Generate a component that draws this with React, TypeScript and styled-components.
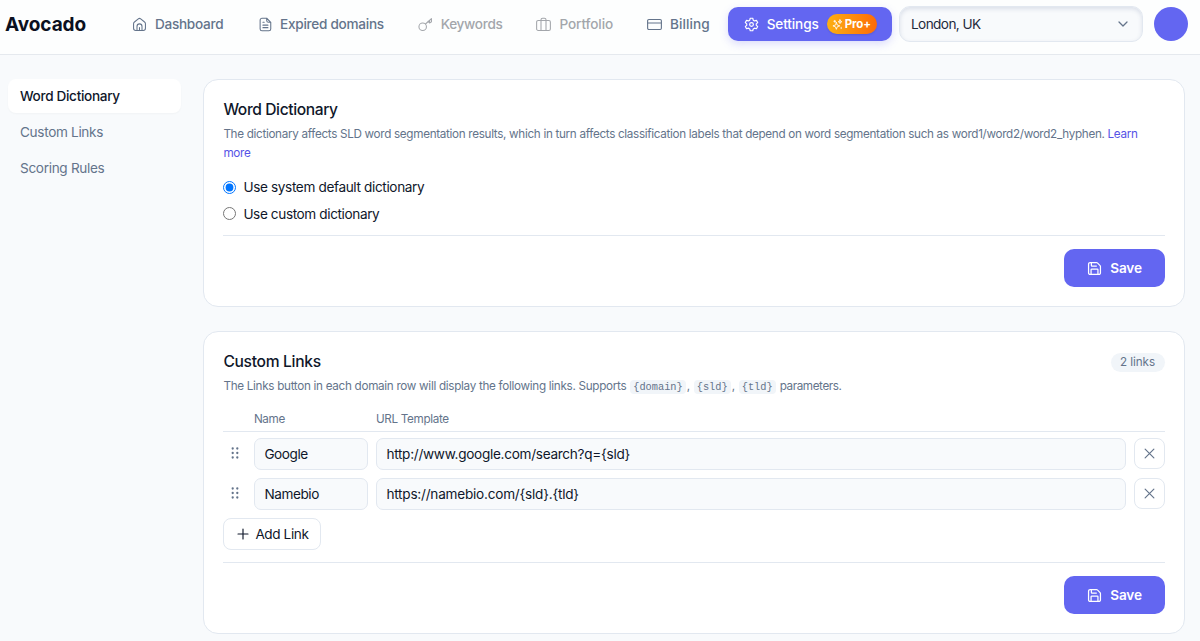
import React from "react";
import styled, { createGlobalStyle, css } from "styled-components";

const GlobalStyle = createGlobalStyle`
  *, *::before, *::after { box-sizing: border-box; }
  html, body { margin: 0; height: 100%; overflow: hidden; }
  body {
    background: #f8fafc;
    color: #0f172a;
    font-family: Inter, sans-serif;
    font-size: 13.6px;
  }
  button, input { font: inherit; color: inherit; }
`;

const Text = styled.span<{ $track?: number }>`
  letter-spacing: ${p => p.$track ?? 0}px;
  white-space: nowrap;
`;

/* ---------- header ---------- */

const Header = styled.header`
  display: flex;
  align-items: flex-start;
  height: 55px;
  padding: 7px 12px 0 5px;
  background: #fdfefe;
  border-bottom: 1px solid #e5e9ee;
`;

const Brand = styled.div`
  width: 111px;
  line-height: 35px;
  font-size: 19px;
  font-weight: 700;
  letter-spacing: -0.08px;
  color: #0b1020;
`;

const Nav = styled.nav`
  display: flex;
  gap: 1.8px;
  width: 783px;
`;

const NavItem = styled.a<{ $active?: boolean; $disabled?: boolean }>`
  display: flex;
  align-items: center;
  gap: 8px;
  height: 34px;
  padding: 0 16px;
  border-radius: 10px;
  font-weight: 500;
  color: ${p => (p.$disabled ? "#a3a6ab" : "#64748b")};
  ${p =>
    p.$active &&
    css`
      padding-right: 15px;
      color: #fff;
      background: #6366f1;
      box-shadow: 0 3px 8px rgba(99, 102, 241, 0.22);
    `}
  svg { flex: none; }
`;

const ProBadge = styled.span`
  display: flex;
  align-items: center;
  gap: 2px;
  height: 20px;
  padding: 0 6px 0 5px;
  border-radius: 10px;
  background: linear-gradient(90deg, #fcb012, #fd6a08);
  box-shadow: 0 1px 2px rgba(0, 0, 0, 0.12);
  color: #fff;
  font-size: 11.5px;
  font-weight: 700;
  letter-spacing: -0.1px;
`;

const LocationSelect = styled.button`
  display: flex;
  align-items: center;
  justify-content: space-between;
  width: 244px;
  height: 36px;
  margin: -1px 11px 0 0;
  padding: 0 13px 0 11px;
  border: 1px solid #e2e8f0;
  border-radius: 11px;
  background: #f8fafc;
  box-shadow: inset 0 2px 4px rgba(71, 85, 135, 0.16);
  color: #1e293b;
  svg { color: #64748b; }
`;

const Avatar = styled.div`
  width: 34px;
  height: 34px;
  border-radius: 50%;
  background: #6366f1;
`;

/* ---------- body ---------- */

const Body = styled.div`
  display: flex;
  align-items: flex-start;
  padding: 23.5px 15.5px 0 8px;
`;

const Sidebar = styled.aside`
  display: flex;
  flex-direction: column;
  gap: 2.3px;
  width: 173px;
  margin-right: 22.4px;
`;

const SideLink = styled.a<{ $active?: boolean }>`
  height: 34px;
  padding: 0 12px;
  line-height: 34px;
  border-radius: 8px;
  color: ${p => (p.$active ? "#0f172a" : "#64748b")};
  font-weight: ${p => (p.$active ? 500 : 400)};
  ${p => p.$active && css`background: #fff; box-shadow: 0 1px 2px rgba(15, 23, 42, 0.03);`}
`;

const Main = styled.main`
  display: flex;
  flex: 1;
  flex-direction: column;
  gap: 23.5px;
  min-width: 0;
`;

const Card = styled.section`
  padding: 19px;
  background: #fff;
  border: 1px solid #e2e8f0;
  border-radius: 15px;
`;

const CardHead = styled.div`
  display: flex;
  justify-content: space-between;
  height: 21px;
`;

const Title = styled.h2`
  margin: 0;
  line-height: 22px;
  font-size: 15.6px;
  font-weight: 500;
`;

const Description = styled.p<{ $track: number }>`
  margin: 5.500px 0 0;
  line-height: 19px;
  font-size: 11.7px;
  letter-spacing: ${p => p.$track}px;
  color: #64748b;
`;

const Link = styled.a`color: #5653e6;`;

const Options = styled.div`
  display: flex;
  flex-direction: column;
  gap: 5.5px;
  margin-top: 13.5px;
`;

const Option = styled.label`
  display: flex;
  align-items: center;
  gap: 7px;
  height: 21px;
`;

const Radio = styled.input`
  width: 13px;
  height: 13px;
  margin: 0;
`;

const Footer = styled.footer<{ $gap: number }>`
  display: flex;
  justify-content: flex-end;
  margin-top: ${p => p.$gap}px;
  padding-top: 13.5px;
  border-top: 1px solid #e2e8f0;
`;

const SaveButton = styled.button`
  display: flex;
  align-items: center;
  justify-content: center;
  gap: 8px;
  width: 101px;
  height: 38px;
  padding: 0 0 0 1px;
  border: 0;
  border-radius: 10px;
  background: #6366f1;
  color: #fff;
  font-weight: 600;
`;

const Count = styled.span`
  height: 19px;
  margin-top: 2px;
  padding: 0 9.5px;
  line-height: 19px;
  border-radius: 10px;
  background: #f1f5f9;
  color: #64748b;
  font-size: 11.7px;
`;

const Code = styled.code`
  margin: 0 1px 0 1px;
  padding: 1px 3px;
  border-radius: 4px;
  background: #f1f5f9;
  font-family: "Liberation Mono", monospace;
  font-size: 10.3px;
  letter-spacing: 0;
`;

const columns = css`
  display: grid;
  grid-template-columns: 23px 114.5px 1fr 31px;
  column-gap: 7.5px;
`;

const TableHead = styled.div`
  ${columns}
  height: 22px;
  margin-top: 13px;
  line-height: 18px;
  border-bottom: 1px solid #e2e8f0;
  font-size: 11.7px;
  color: #64748b;
`;

const Rows = styled.div`
  display: flex;
  flex-direction: column;
  gap: 7.5px;
  padding: 5.5px 0 7.5px;
`;

const LinkRow = styled.div`
  ${columns}
  height: 32.5px;
`;

const Handle = styled.span`
  display: flex;
  justify-content: center;
  padding-top: 8px;
  color: #64748b;
`;

const Field = styled.input<{ $track: number }>`
  width: 100%;
  min-width: 0;
  height: 32.5px;
  padding: 0 9.5px;
  border: 1px solid #e2e8f0;
  border-radius: 7px;
  background: #f8fafc;
  letter-spacing: ${p => p.$track}px;
`;

const RemoveButton = styled.button`
  display: flex;
  align-items: center;
  justify-content: center;
  width: 31px;
  height: 31px;
  padding: 0;
  border: 1px solid #e2e8f0;
  border-radius: 8px;
  background: #fff;
  color: #64748b;
`;

const AddButton = styled.button`
  display: flex;
  align-items: center;
  gap: 6px;
  width: 98px;
  height: 32px;
  padding: 0 0 0 13px;
  border: 1px solid #e2e8f0;
  border-radius: 8px;
  background: #fff;
`;

/* ---------- icons ---------- */

type IconProps = { size?: number; stroke?: number; children: React.ReactNode };

const Icon = ({ size = 15, stroke = 1.7, children }: IconProps) => (
  <svg width={size} height={size} viewBox="0 0 24 24" fill="none" stroke="currentColor"
    strokeWidth={stroke} strokeLinecap="round" strokeLinejoin="round">{children}</svg>
);

const HomeIcon = () => (
  <Icon>
    <path d="M2.5 10.8c0-1.2.5-2.1 1.4-2.8l6.2-5.1c1.1-.9 2.7-.9 3.8 0L20.1 8c.9.7 1.4 1.6 1.4 2.8V18c0 2.2-1.3 3.5-3.5 3.5H6c-2.2 0-3.5-1.3-3.5-3.5z" />
    <path d="M8 21.5V15a4 4 0 0 1 8 0v6.5M12 17v4.5" />
  </Icon>
);
const FileIcon = () => (
  <Icon>
    <path d="M15.500 2H8a3 3 0 0 0-3 3v14a3 3 0 0 0 3 3h11a3 3 0 0 0 3-3V8.500zM15.500 2v3.500a3 3 0 0 0 3 3H22M9.500 8.500h2M9.500 13h8M9.500 17h8" />
  </Icon>
);
const KeyIcon = () => (
  <Icon>
    <circle cx="7.500" cy="15.500" r="6" />
    <path d="m12 11.200 9.500-8.700v5.300l-3 1.700-2.500-2.500M18.500 5.200V9" />
  </Icon>
);
const CaseIcon = () => (
  <Icon>
    <rect x="1" y="5.500" width="22" height="16" rx="2.500" />
    <path d="M8 21V4.500A2.500 2.500 0 0 1 10.500 2h3A2.500 2.500 0 0 1 16 4.500V21" />
  </Icon>
);
const CardIcon = () => (
  <Icon stroke={1.8}>
    <rect x="1" y="4" width="22" height="16" rx="2" />
    <path d="M1 9.500h22" />
  </Icon>
);
const GearIcon = () => (
  <Icon stroke={1.9}>
    <path d="M10 2h4l.8 3.100 2 1.200 3.100-.9 2 3.500-2.300 2.200v2l2.300 2.200-2 3.500-3.100-.9-2 1.200L14 22h-4l-.8-2.900-2-1.200-3.100.9-2-3.500 2.300-2.200v-2L2.100 8.900l2-3.500 3.100.9 2-1.200z" />
    <circle cx="12" cy="12" r="3" />
  </Icon>
);
const SparkIcon = () => (
  <Icon size={11} stroke={1.900}>
    <path d="M9.500 7.500 11.500 13l5.500 2-5.500 2-2 5.500-2-5.500-5.500-2 5.500-2zM17.500 2l1 3 3 1-3 1-1 3-1-3-3-1 3-1zM6 3v4M4 5h4M20 18v3" />
  </Icon>
);
const SaveIcon = () => (
  <Icon stroke={2}>
    <path d="M15.200 2.500a2 2 0 0 1 1.400.6l4.300 4.300a2 2 0 0 1 .6 1.400V19a2.500 2.500 0 0 1-2.500 2.500H5A2.500 2.500 0 0 1 2.500 19V5A2.500 2.500 0 0 1 5 2.500z" />
    <path d="M17.500 21v-7a1 1 0 0 0-1-1h-9a1 1 0 0 0-1 1v7M7 3v4a1 1 0 0 0 1 1h7" />
  </Icon>
);
const ChevronIcon = () => <Icon size={12} stroke={2.500}><path d="m4 8 8 8 8-8" /></Icon>;
const CloseIcon = () => <Icon size={15} stroke={1.900}><path d="m5 5 14 14M19 5 5 19" /></Icon>;
const PlusIcon = () => <Icon size={12} stroke={2.300}><path d="M12 2v20M2 12h20" /></Icon>;
const GripIcon = () => (
  <svg width="8" height="14" viewBox="0 0 8 14" fill="currentColor">
    {[2.500, 7, 11.500].map(y => [1.700, 6.300].map(x => <circle key={`${x}-${y}`} cx={x} cy={y} r="1.150" />))}
  </svg>
);

/* ---------- data ---------- */

const navigation = [
  { label: "Dashboard", track: -0.29, icon: <HomeIcon /> },
  { label: "Expired domains", track: -0.28, icon: <FileIcon /> },
  { label: "Keywords", track: -0.3, icon: <KeyIcon />, disabled: true },
  { label: "Portfolio", track: -0.1, icon: <CaseIcon />, disabled: true },
  { label: "Billing", track: 0.1, icon: <CardIcon /> },
];

const sections = [
  { label: "Word Dictionary", track: -0.33 },
  { label: "Custom Links", track: -0.33 },
  { label: "Scoring Rules", track: -0.32 },
];

const links = [
  { name: "Google", nameTrack: -0.42, url: "http://www.google.com/search?q={sld}", urlTrack: -0.29 },
  { name: "Namebio", nameTrack: -0.43, url: "https://namebio.com/{sld}.{tld}", urlTrack: -0.23 },
];

const Save = ({ gap }: { gap: number }) => (
  <Footer $gap={gap}>
    <SaveButton><SaveIcon /><Text $track={-0.15}>Save</Text></SaveButton>
  </Footer>
);

export default function App() {
  return (
    <>
      <GlobalStyle />
      <Header>
        <Brand>Avocado</Brand>
        <Nav>
          {navigation.map(item => (
            <NavItem key={item.label} $disabled={item.disabled}>
              {item.icon}
              <Text $track={item.track}>{item.label}</Text>
            </NavItem>
          ))}
          <NavItem $active>
            <GearIcon />
            <Text $track={-0.13}>Settings</Text>
            <ProBadge><SparkIcon />Pro+</ProBadge>
          </NavItem>
        </Nav>
        <LocationSelect><Text $track={-0.59}>London, UK</Text><ChevronIcon /></LocationSelect>
        <Avatar />
      </Header>
      <Body>
        <Sidebar>
          {sections.map((item, index) => (
            <SideLink key={item.label} $active={index === 0}>
              <Text $track={item.track}>{item.label}</Text>
            </SideLink>
          ))}
        </Sidebar>
        <Main>
          <Card>
            <CardHead><Title><Text $track={-0.39}>Word Dictionary</Text></Title></CardHead>
            <Description $track={-0.315}>
              The dictionary affects SLD word segmentation results, which in turn affects classification labels that
              depend on word segmentation such as word1/word2/word2_hyphen. <Link>Learn</Link> <Link>more</Link>
            </Description>
            <Options>
              <Option>
                <Radio type="radio" name="dictionary" defaultChecked />
                <Text $track={-0.36}>Use system default dictionary</Text>
              </Option>
              <Option>
                <Radio type="radio" name="dictionary" />
                <Text $track={-0.39}>Use custom dictionary</Text>
              </Option>
            </Options>
            <Save gap={10.5} />
          </Card>
          <Card>
            <CardHead>
              <Title><Text $track={-0.3}>Custom Links</Text></Title>
              <Count><Text $track={-0.09}>2 links</Text></Count>
            </CardHead>
            <Description $track={-0.3}>
              The Links button in each domain row will display the following links. Supports <Code>{"{domain}"}</Code>
              , <Code>{"{sld}"}</Code>, <Code>{"{tld}"}</Code> <Text $track={-0.4}>parameters.</Text>
            </Description>
            <TableHead>
              <span />
              <Text $track={-0.37}>Name</Text>
              <Text $track={-0.33}>URL Template</Text>
            </TableHead>
            <Rows>
              {links.map(link => (
                <LinkRow key={link.name}>
                  <Handle><GripIcon /></Handle>
                  <Field $track={link.nameTrack} defaultValue={link.name} />
                  <Field $track={link.urlTrack} defaultValue={link.url} />
                  <RemoveButton><CloseIcon /></RemoveButton>
                </LinkRow>
              ))}
            </Rows>
            <AddButton><PlusIcon /><Text $track={-0.41}>Add Link</Text></AddButton>
            <Save gap={12} />
          </Card>
        </Main>
      </Body>
    </>
  );
}
